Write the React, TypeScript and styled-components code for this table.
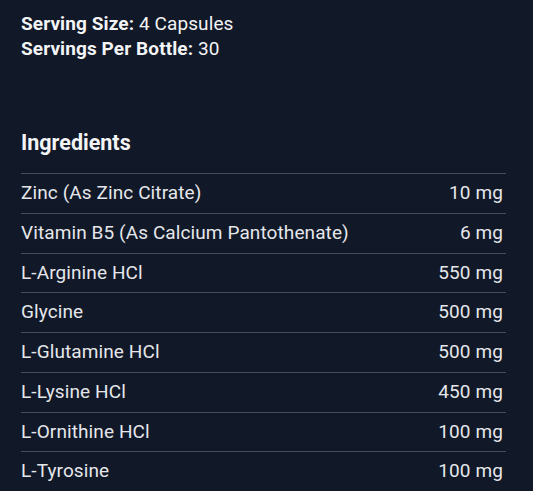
import styled, { createGlobalStyle } from "styled-components";

const GlobalStyle = createGlobalStyle`
    html, body {
        margin: 0;
        padding: 0;
        background-color: #111827;
    }
    body {
        font-family: Roboto, "Noto Sans", sans-serif;
        color: #e5e7eb;
    }
`;

const Page = styled.div`
    min-height: 491px;
    padding: 11px 27px 0 21px;
    box-sizing: border-box;
`;

const ServingInfo = styled.div`
    display: flex;
    flex-direction: column;
    font-size: 19px;
    letter-spacing: 0.1px;
    line-height: 25px;
    color: #f3f4f6;
    strong {
        font-weight: 700;
    }
`;

const Heading = styled.h2`
    margin: 68px 0 0;
    font-size: 21.5px;
    line-height: 28px;
    font-weight: 700;
    color: #f3f4f6;
    padding-bottom: 16px;
`;

const Table = styled.div`
    display: flex;
    flex-direction: column;
    border-top: 1px solid #474c55;
`;

const Row = styled.div`
    display: flex;
    justify-content: space-between;
    align-items: center;
    padding: 7px 3px 7.75px 0;
    font-size: 19px;
    letter-spacing: 0.1px;
    line-height: 24px;
    border-bottom: 1px solid #474c55;
`;

const Name = styled.span``;
const Amount = styled.span``;

const ingredients = [
    { name: "Zinc (As Zinc Citrate)", amount: "10 mg" },
    { name: "Vitamin B5 (As Calcium Pantothenate)", amount: "6 mg" },
    { name: "L-Arginine HCl", amount: "550 mg" },
    { name: "Glycine", amount: "500 mg" },
    { name: "L-Glutamine HCl", amount: "500 mg" },
    { name: "L-Lysine HCl", amount: "450 mg" },
    { name: "L-Ornithine HCl", amount: "100 mg" },
    { name: "L-Tyrosine", amount: "100 mg" },
];

export default function App() {
    return (
        <>
            <GlobalStyle />
            <Page>
                <ServingInfo>
                    <span><strong>Serving Size:</strong> 4 Capsules</span>
                    <span><strong>Servings Per Bottle:</strong> 30</span>
                </ServingInfo>
                <Heading>Ingredients</Heading>
                <Table>
                    {ingredients.map((item) => (
                        <Row key={item.name}>
                            <Name>{item.name}</Name>
                            <Amount>{item.amount}</Amount>
                        </Row>
                    ))}
                </Table>
            </Page>
        </>
    );
}
